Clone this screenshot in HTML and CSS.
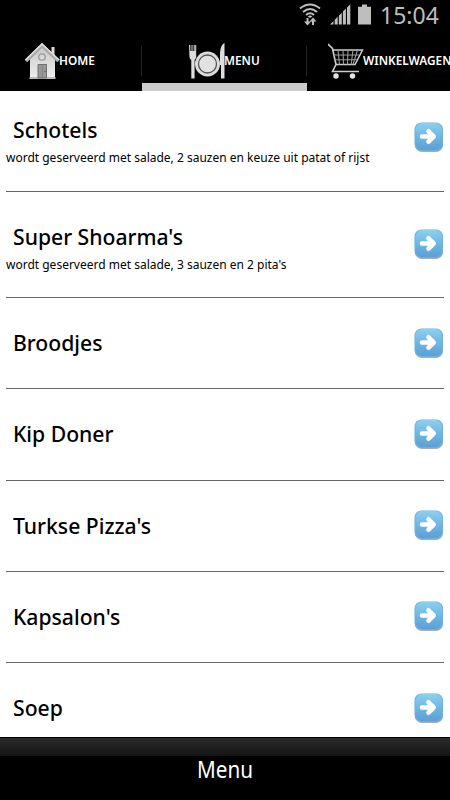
FILE: index.html
```html
<!DOCTYPE html>
<html lang="nl">
<head>
<meta charset="utf-8">
<title>Menu</title>
<link rel="stylesheet" href="styles.css">
</head>
<body>
<svg width="0" height="0" class="defs">
  <defs>
    <linearGradient id="blue" x1="0" y1="0" x2="0" y2="1"><stop offset="0" stop-color="#8bd0ef"/><stop offset=".5" stop-color="#70b7e2"/><stop offset="1" stop-color="#5b9fd7"/></linearGradient>
    <linearGradient id="wall" x1="0" y1="0" x2="0" y2="1"><stop offset="0" stop-color="#c9c9c9"/><stop offset="1" stop-color="#eee"/></linearGradient>
    <symbol id="arrow" viewBox="0 0 30 31">
      <rect x="1" y="2" width="28" height="28" rx="7" fill="#a5adb5"/>
      <rect x=".5" y=".5" width="28.5" height="28.5" rx="7" fill="#6fb0da"/>
      <rect x="1.5" y="1" width="26.5" height="27" rx="6.5" fill="url(#blue)"/>
      <path d="M8 14.500H19M14.500 9.300L19.700 14.500L14.500 19.700" fill="none" stroke="#fff" stroke-width="4.600" stroke-linejoin="round" stroke-linecap="round"/>
    </symbol>
  </defs>
</svg>
<div class="screen">
  <header class="status">
    <svg class="wifi" width="22" height="24" viewBox="0 0 22 24" fill="none" stroke="#bebebe" stroke-width="2">
      <path d="M1 5.500Q11-2.500 21 5.500M4 9Q11 3 18 9M7 12Q11 8.500 15 12"/>
      <path d="M9.500 14.200a2 2 0 0 1 3 0"/>
      <path d="M8.500 15v5M14 22v-5" stroke-width="2"/>
      <path d="M5 18.500h7L8.500 22.500zM10.500 18.500h7L14 14.500z" fill="#bebebe" stroke="none"/>
    </svg>
    <svg class="signal" width="21" height="21" viewBox="0 0 21 21" fill="#bebebe"><path d="M0 20.500L3.500 17v3.500zM4.700 15.800L7.700 12.800V20.500h-3zM8.800 11.700l3-3V20.500h-3zM12.900 7.600l3-3V20.500h-3zM17 3.500L20.300.2V20.500H17z"/></svg>
    <svg class="battery" width="13" height="21" viewBox="0 0 13 21"><path d="M4 .5h5v2.200h4v17.800H0V2.700h4z" fill="#bebebe"/></svg>
    <span class="clock">15:04</span>
  </header>
  <nav class="tabs">
    <a class="tab">
      <svg width="36" height="37" viewBox="0 0 36 37">
        <path d="M27.500 4h3v9h-3z" fill="#ddd"/>
        <path d="M6 16L18 4L31 16V35.500H6z" fill="url(#wall)"/>
        <path d="M5.500 34h26v2h-26z" fill="#bcbcbc"/>
        <path d="M2 18L18 2.500L34.500 18" fill="none" stroke="#aaa" stroke-width="3.600"/>
        <path d="M1.500 17L18 1L35 17" fill="none" stroke="#e2e2e2" stroke-width="1.600"/>
        <circle cx="18" cy="14" r="3.200" fill="#d9d9d9" stroke="#999" stroke-width="1.300"/>
        <path d="M14 21.500h8.500V35H14z" fill="#989898" stroke="#707070"/>
        <path d="M18.200 22v13" stroke="#818181"/><circle cx="21" cy="28.500" r=".7" fill="#555"/>
      </svg><span>HOME</span>
    </a>
    <a class="tab active">
      <svg width="36" height="37" viewBox="0 0 36 37">
        <path d="M0 2h1.300v6h1.200V2h1v6h1.200V2h1v6h.5V2h1v12Q6.800 16 5.600 17V35.500H2.300V17Q.5 16 .5 14z" fill="#dedede"/>
        <path d="M35.500 0V35.500H32V22h-1V10Q31.500 1.500 35.500 0z" fill="#dedede"/>
        <circle cx="18.500" cy="21" r="12.500" fill="#dcdcdc"/><circle cx="18.500" cy="21" r="9" fill="#e2e2e2" stroke="#555" stroke-width="1.300"/>
      </svg><span>MENU</span>
    </a>
    <a class="tab cart">
      <svg width="36" height="37" viewBox="0 0 36 37" fill="none" stroke="#cfcfcf">
        <path d="M0 1l4.500 4.500L8 21.500 4.500 28.500H31" stroke-width="1.600"/>
        <path d="M4.500 7H34.500L27 21.500H8" stroke-width="1.500"/>
        <path d="M5.500 12H31M6.500 16.800H29M10 7l1.500 14.500M15 7l.5 14.500M20 7l-.5 14.500M25 7l-1.800 14.500M29.500 7l-4.500 14.500" stroke="#999" stroke-width="1.100"/>
        <circle cx="8" cy="33" r="2.700" fill="#e5e5e5" stroke="none"/><circle cx="24.500" cy="33" r="2.700" fill="#e5e5e5" stroke="none"/>
      </svg><span>WINKELWAGEN</span>
    </a>
  </nav>
  <main class="list">
    <section class="row described first"><div><h2>Schotels</h2><p>wordt geserveerd met salade, 2 sauzen en keuze uit patat of rijst</p></div><svg class="go"><use href="#arrow"/></svg></section>
    <section class="row described"><div><h2>Super Shoarma's</h2><p>wordt geserveerd met salade, 3 sauzen en 2 pita's</p></div><svg class="go"><use href="#arrow"/></svg></section>
    <section class="row"><h2>Broodjes</h2><svg class="go"><use href="#arrow"/></svg></section>
    <section class="row"><h2>Kip Doner</h2><svg class="go"><use href="#arrow"/></svg></section>
    <section class="row"><h2>Turkse Pizza's</h2><svg class="go"><use href="#arrow"/></svg></section>
    <section class="row"><h2>Kapsalon's</h2><svg class="go"><use href="#arrow"/></svg></section>
    <section class="row"><h2>Soep</h2><svg class="go"><use href="#arrow"/></svg></section>
  </main>
  <footer class="footer"><div class="strip"></div><div class="bottom">Menu</div></footer>
</div>
</body>
</html>
```
FILE: styles.css
```css
* { box-sizing: border-box; }
body { margin: 0; font-family: "Noto Sans", sans-serif; background: #000; }
.defs { display: block; height: 0; }
.screen { width: 450px; height: 800px; display: flex; flex-direction: column; overflow: hidden; }
.status { height: 30px; flex: none; display: flex; justify-content: flex-end; padding: 3px 10px 0 0; }
.wifi { margin-right: 9px; }
.signal { margin: 1px 7px 0 0; }
.battery { margin: 1px 9px 0 0; }
.clock { width: 60px; font-size: 23px; line-height: 24px; color: #bebebe; white-space: nowrap; }
.tabs { height: 61px; flex: none; display: flex; margin-left: -23px; color: #fff; }
.tab { width: 165px; flex: none; display: flex; align-items: center; border-bottom: 8px solid transparent; font-size: 13px; font-weight: 600; padding: 9px 0 0 47px; background: linear-gradient(#252525, #252525) right 16px / 1px 30px no-repeat; white-space: nowrap; }
.tab svg { flex: none; margin-right: -1px; }
.tab span { line-height: 18px; margin-top: -3px; transform: scaleX(.91); transform-origin: left; }
.active { border-bottom-color: #ccc; }
.cart { padding-left: 21px; background: none; }
.list { height: 646px; flex: none; background: #fff; overflow: hidden; color: #000; }
.row { height: 91.25px; margin: 0 6px; border-bottom: 1px solid #666; display: flex; justify-content: space-between; align-items: center; }
.row h2 { margin: 0 0 0 6.5px; font-size: 22.5px; line-height: 30px; font-weight: 500; white-space: nowrap; transform: scaleX(.94); transform-origin: left; }
.row p { margin: 4px 0 0; font-size: 12px; line-height: 18px; white-space: nowrap; }
.described { height: 106.5px; }
.described > div { padding-top: 7px; }
.first { margin-top: -6px; }
.go { width: 30px; height: 31px; flex: none; }
.footer { flex: 1; background: #000; }
.strip { height: 19px; background: linear-gradient(#2b2b2b, #151515); border-top: 1px solid #000; }
.bottom { height: 44px; text-align: center; color: #fff; font-size: 23px; line-height: 26px; transform: scaleX(.9); }
```
